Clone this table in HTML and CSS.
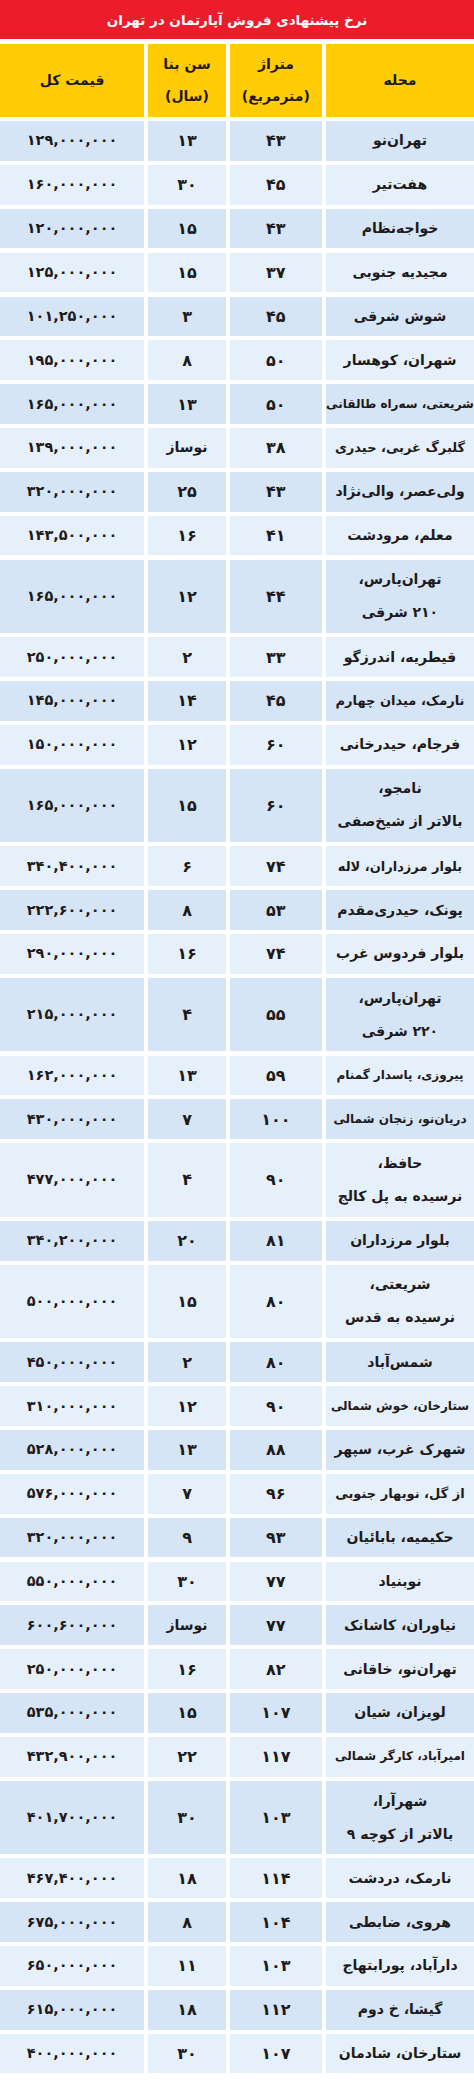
FILE: index.html
```html
<!DOCTYPE html>
<html lang="fa" dir="rtl">
<head>
<meta charset="utf-8">
<title>نرخ پیشنهادی فروش آپارتمان در تهران</title>
<link rel="stylesheet" href="styles.css">
</head>
<body>
<div class="sheet">
  <h1 class="title">نرخ پیشنهادی فروش آپارتمان در تهران</h1>
  <div class="row head">
    <div class="cell">محله</div>
    <div class="cell">متراژ<br>(مترمربع)</div>
    <div class="cell">سن بنا<br>(سال)</div>
    <div class="cell">قیمت کل</div>
  </div>
  <div class="rows">
    <div class="row"><div class="cell">تهران‌نو</div><div class="cell dig">۴۳</div><div class="cell dig">۱۳</div><div class="cell num">۱۲۹,۰۰۰,۰۰۰</div></div>
    <div class="row"><div class="cell">هفت‌تیر</div><div class="cell dig">۴۵</div><div class="cell dig">۳۰</div><div class="cell num">۱۶۰,۰۰۰,۰۰۰</div></div>
    <div class="row"><div class="cell">خواجه‌نظام</div><div class="cell dig">۴۳</div><div class="cell dig">۱۵</div><div class="cell num">۱۲۰,۰۰۰,۰۰۰</div></div>
    <div class="row"><div class="cell">مجیدیه جنوبی</div><div class="cell dig">۳۷</div><div class="cell dig">۱۵</div><div class="cell num">۱۲۵,۰۰۰,۰۰۰</div></div>
    <div class="row"><div class="cell">شوش شرقی</div><div class="cell dig">۴۵</div><div class="cell dig">۳</div><div class="cell num">۱۰۱,۲۵۰,۰۰۰</div></div>
    <div class="row"><div class="cell">شهران، کوهسار</div><div class="cell dig">۵۰</div><div class="cell dig">۸</div><div class="cell num">۱۹۵,۰۰۰,۰۰۰</div></div>
    <div class="row"><div class="cell long">شریعتی، سه‌راه طالقانی</div><div class="cell dig">۵۰</div><div class="cell dig">۱۳</div><div class="cell num">۱۶۵,۰۰۰,۰۰۰</div></div>
    <div class="row"><div class="cell mid">گلبرگ غربی، حیدری</div><div class="cell dig">۳۸</div><div class="cell">نوساز</div><div class="cell num">۱۳۹,۰۰۰,۰۰۰</div></div>
    <div class="row"><div class="cell">ولی‌عصر، والی‌نژاد</div><div class="cell dig">۴۳</div><div class="cell dig">۲۵</div><div class="cell num">۳۲۰,۰۰۰,۰۰۰</div></div>
    <div class="row"><div class="cell">معلم، مرودشت</div><div class="cell dig">۴۱</div><div class="cell dig">۱۶</div><div class="cell num">۱۴۳,۵۰۰,۰۰۰</div></div>
    <div class="row tall"><div class="cell">تهران‌پارس،<br>۲۱۰ شرقی</div><div class="cell dig">۴۴</div><div class="cell dig">۱۲</div><div class="cell num">۱۶۵,۰۰۰,۰۰۰</div></div>
    <div class="row"><div class="cell">قیطریه، اندرزگو</div><div class="cell dig">۳۳</div><div class="cell dig">۲</div><div class="cell num">۲۵۰,۰۰۰,۰۰۰</div></div>
    <div class="row"><div class="cell mid">نارمک، میدان چهارم</div><div class="cell dig">۴۵</div><div class="cell dig">۱۴</div><div class="cell num">۱۴۵,۰۰۰,۰۰۰</div></div>
    <div class="row"><div class="cell">فرجام، حیدرخانی</div><div class="cell dig">۶۰</div><div class="cell dig">۱۲</div><div class="cell num">۱۵۰,۰۰۰,۰۰۰</div></div>
    <div class="row tall"><div class="cell">نامجو،<br>بالاتر از شیخ‌صفی</div><div class="cell dig">۶۰</div><div class="cell dig">۱۵</div><div class="cell num">۱۶۵,۰۰۰,۰۰۰</div></div>
    <div class="row"><div class="cell mid">بلوار مرزداران، لاله</div><div class="cell dig">۷۴</div><div class="cell dig">۶</div><div class="cell num">۳۴۰,۴۰۰,۰۰۰</div></div>
    <div class="row"><div class="cell">پونک، حیدری‌مقدم</div><div class="cell dig">۵۳</div><div class="cell dig">۸</div><div class="cell num">۲۲۲,۶۰۰,۰۰۰</div></div>
    <div class="row"><div class="cell">بلوار فردوس غرب</div><div class="cell dig">۷۴</div><div class="cell dig">۱۶</div><div class="cell num">۲۹۰,۰۰۰,۰۰۰</div></div>
    <div class="row tall"><div class="cell">تهران‌پارس،<br>۲۲۰ شرقی</div><div class="cell dig">۵۵</div><div class="cell dig">۴</div><div class="cell num">۲۱۵,۰۰۰,۰۰۰</div></div>
    <div class="row"><div class="cell long">پیروزی، پاسدار گمنام</div><div class="cell dig">۵۹</div><div class="cell dig">۱۳</div><div class="cell num">۱۶۲,۰۰۰,۰۰۰</div></div>
    <div class="row"><div class="cell long">دریان‌نو، زنجان شمالی</div><div class="cell dig">۱۰۰</div><div class="cell dig">۷</div><div class="cell num">۴۳۰,۰۰۰,۰۰۰</div></div>
    <div class="row tall"><div class="cell">حافظ،<br>نرسیده به پل کالج</div><div class="cell dig">۹۰</div><div class="cell dig">۴</div><div class="cell num">۴۷۷,۰۰۰,۰۰۰</div></div>
    <div class="row"><div class="cell">بلوار مرزداران</div><div class="cell dig">۸۱</div><div class="cell dig">۲۰</div><div class="cell num">۳۴۰,۲۰۰,۰۰۰</div></div>
    <div class="row tall"><div class="cell">شریعتی،<br>نرسیده به قدس</div><div class="cell dig">۸۰</div><div class="cell dig">۱۵</div><div class="cell num">۵۰۰,۰۰۰,۰۰۰</div></div>
    <div class="row"><div class="cell">شمس‌آباد</div><div class="cell dig">۸۰</div><div class="cell dig">۲</div><div class="cell num">۴۵۰,۰۰۰,۰۰۰</div></div>
    <div class="row"><div class="cell long">ستارخان، خوش شمالی</div><div class="cell dig">۹۰</div><div class="cell dig">۱۲</div><div class="cell num">۳۱۰,۰۰۰,۰۰۰</div></div>
    <div class="row"><div class="cell">شهرک غرب، سپهر</div><div class="cell dig">۸۸</div><div class="cell dig">۱۳</div><div class="cell num">۵۲۸,۰۰۰,۰۰۰</div></div>
    <div class="row"><div class="cell mid">از گل، نوبهار جنوبی</div><div class="cell dig">۹۶</div><div class="cell dig">۷</div><div class="cell num">۵۷۶,۰۰۰,۰۰۰</div></div>
    <div class="row"><div class="cell">حکیمیه، بابائیان</div><div class="cell dig">۹۳</div><div class="cell dig">۹</div><div class="cell num">۳۲۰,۰۰۰,۰۰۰</div></div>
    <div class="row"><div class="cell">نوبنیاد</div><div class="cell dig">۷۷</div><div class="cell dig">۳۰</div><div class="cell num">۵۵۰,۰۰۰,۰۰۰</div></div>
    <div class="row"><div class="cell">نیاوران، کاشانک</div><div class="cell dig">۷۷</div><div class="cell">نوساز</div><div class="cell num">۶۰۰,۶۰۰,۰۰۰</div></div>
    <div class="row"><div class="cell">تهران‌نو، خاقانی</div><div class="cell dig">۸۲</div><div class="cell dig">۱۶</div><div class="cell num">۲۵۰,۰۰۰,۰۰۰</div></div>
    <div class="row"><div class="cell">لویزان، شیان</div><div class="cell dig">۱۰۷</div><div class="cell dig">۱۵</div><div class="cell num">۵۳۵,۰۰۰,۰۰۰</div></div>
    <div class="row"><div class="cell long">امیرآباد، کارگر شمالی</div><div class="cell dig">۱۱۷</div><div class="cell dig">۲۲</div><div class="cell num">۴۳۲,۹۰۰,۰۰۰</div></div>
    <div class="row tall"><div class="cell">شهرآرا،<br>بالاتر از کوچه ۹</div><div class="cell dig">۱۰۳</div><div class="cell dig">۳۰</div><div class="cell num">۴۰۱,۷۰۰,۰۰۰</div></div>
    <div class="row"><div class="cell">نارمک، دردشت</div><div class="cell dig">۱۱۴</div><div class="cell dig">۱۸</div><div class="cell num">۴۶۷,۴۰۰,۰۰۰</div></div>
    <div class="row"><div class="cell">هروی، ضابطی</div><div class="cell dig">۱۰۴</div><div class="cell dig">۸</div><div class="cell num">۶۷۵,۰۰۰,۰۰۰</div></div>
    <div class="row"><div class="cell">دارآباد، پورابتهاج</div><div class="cell dig">۱۰۳</div><div class="cell dig">۱۱</div><div class="cell num">۶۵۰,۰۰۰,۰۰۰</div></div>
    <div class="row"><div class="cell">گیشا، خ دوم</div><div class="cell dig">۱۱۲</div><div class="cell dig">۱۸</div><div class="cell num">۶۱۵,۰۰۰,۰۰۰</div></div>
    <div class="row"><div class="cell">ستارخان، شادمان</div><div class="cell dig">۱۰۷</div><div class="cell dig">۳۰</div><div class="cell num">۴۰۰,۰۰۰,۰۰۰</div></div>
  </div>
</div>
</body>
</html>
```

FILE: styles.css
```css
html, body {
  margin: 0;
  padding: 0;
  background: #ffffff;
}

body {
  font-family: "DejaVu Sans", sans-serif;
  color: #1e1a1b;
  direction: rtl;
}

.sheet {
  width: 474px;
  display: flex;
  flex-direction: column;
  gap: 4.2px;
}

.title {
  margin: 0;
  height: 39.4px;
  background: #ec1c2b;
  color: #ffffff;
  font-size: 13.5px;
  font-weight: bold;
  display: flex;
  align-items: center;
  justify-content: center;
}

.rows {
  display: flex;
  flex-direction: column;
  gap: 4.25px;
}

.row {
  display: grid;
  grid-template-columns: 148px 91.7px 77.4px 1fr;
  column-gap: 4.3px;
  height: 39.6px;
}

.row.tall,
.row.head {
  height: 73.4px;
}

.cell {
  display: flex;
  align-items: center;
  justify-content: center;
  text-align: center;
  font-size: 14px;
  font-weight: bold;
  line-height: 33px;
  white-space: nowrap;
  overflow: hidden;
}

.cell.mid {
  font-size: 13px;
}

.cell.long {
  font-size: 12px;
}

.cell.dig {
  font-size: 16px;
  letter-spacing: 0.5px;
}

.head .cell {
  background: #ffcc05;
  font-size: 14px;
  line-height: 32px;
}

.rows .row:nth-child(odd) .cell {
  background: #d5e5f5;
}

.rows .row:nth-child(even) .cell {
  background: #e6f0fa;
}

.num {
  font-size: 14.5px;
  letter-spacing: 3px;
}
```
